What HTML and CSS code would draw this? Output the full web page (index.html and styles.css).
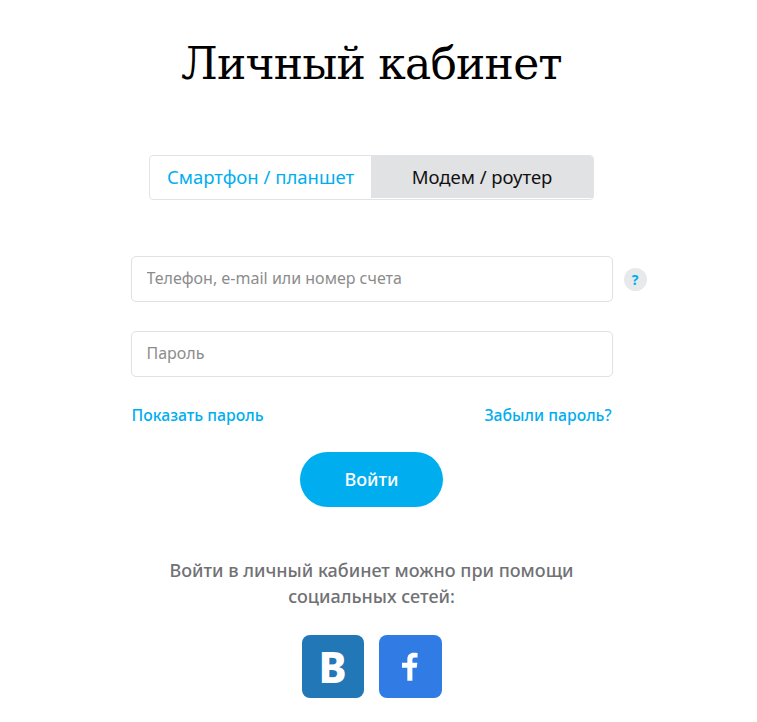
FILE: index.html
```html
<!DOCTYPE html>
<html lang="ru">
<head>
<meta charset="utf-8">
<title>Личный кабинет</title>
<link rel="stylesheet" href="styles.css">
</head>
<body>
<main class="page">
  <h1 class="title">Личный кабинет</h1>
  <div class="tabs">
    <a class="tab tab-active">Смартфон / планшет</a>
    <a class="tab tab-muted">Модем / роутер</a>
  </div>
  <form class="form">
    <div class="field-row">
      <input class="field" type="text" placeholder="Телефон, e-mail или номер счета">
      <span class="help">?</span>
    </div>
    <div class="field-row second">
      <input class="field" type="password" placeholder="Пароль">
    </div>
    <div class="links">
      <a class="link">Показать пароль</a>
      <a class="link">Забыли пароль?</a>
    </div>
    <button class="submit" type="button">Войти</button>
  </form>
  <p class="social-text">Войти в личный кабинет можно при помощи социальных сетей:</p>
  <div class="social">
    <a class="soc soc-vk"><span class="vk-letter">B</span></a>
    <a class="soc soc-fb">
      <svg width="16" height="31" viewBox="0 0 18 32"><path d="M6 32V17.500H0v-5.600h6V8c0-4.800 2.900-7.400 7.200-7.400 2 0 3.800.15 4.300.2v5h-3c-2.300 0-2.800 1.100-2.800 2.700v3.400h5.600l-.75 5.600h-4.850V32z" fill="#fff"/></svg>
    </a>
  </div>
</main>
</body>
</html>
```
FILE: styles.css
```css
* { box-sizing: border-box; }
html, body { margin: 0; padding: 0; background: #fff; }
body { font-family: "Noto Sans", "Open Sans", sans-serif; color: #000; }
.page { width: 743px; height: 722px; overflow: hidden; display: flex; flex-direction: column; align-items: center; padding-top: 34px; }
.title { margin: 0; font-family: "DejaVu Serif", serif; font-weight: 400; font-size: 44px; line-height: 60px; letter-spacing: -0.8px; }
.tabs { margin-top: 61px; width: 445px; height: 45px; display: flex; border: 1px solid #e2e3e5; border-radius: 4px; overflow: hidden; font-size: 18.500px; }
.tab { display: flex; align-items: center; justify-content: center; height: 42px; padding-bottom: 2px; }
.tab-active { width: 221px; color: #00aeef; }
.tab-muted { flex: 1; background: #e1e2e4; color: #111; }
.form { margin-top: 56px; width: 482px; display: flex; flex-direction: column; align-items: center; }
.field-row { position: relative; width: 100%; }
.second { margin-top: 29px; }
.field { display: block; width: 100%; height: 46px; border: 1px solid #e0e1e3; border-radius: 5px; padding: 0 15px 2px; font: 16px "Noto Sans", sans-serif; background: #fff; outline: none; }
.field::placeholder { color: #8c8c8c; opacity: 1; }
.help { position: absolute; left: 493px; top: 12px; width: 23px; height: 23px; border-radius: 50%; background: #e8e9eb; color: #00aeef; font-size: 14px; font-weight: 700; display: flex; align-items: center; justify-content: center; padding-bottom: 1px; }
.links { width: 100%; display: flex; justify-content: space-between; margin-top: 27px; padding: 0 1px; font-size: 15.800px; font-weight: 500; line-height: 22px; color: #00aeef; }
.submit { margin-top: 26px; width: 143px; height: 55px; border: 0; border-radius: 28px; background: #00aeef; color: #fff; font: 500 18px "Noto Sans", sans-serif; padding: 0 0 2px; }
.social-text { margin: 50px 0 0; width: 440px; text-align: center; font-size: 18px; font-weight: 500; line-height: 26px; color: #717174; }
.social { margin-top: 26px; display: flex; gap: 15px; }
.soc { width: 62px; height: 63px; border-radius: 8px; display: flex; align-items: center; justify-content: center; color: #fff; }
.soc-vk { background: #2277b7; }
.soc-fb { width: 63px; background: #307ce4; }
.vk-letter { font-size: 42px; font-weight: 800; line-height: 1; }
```
